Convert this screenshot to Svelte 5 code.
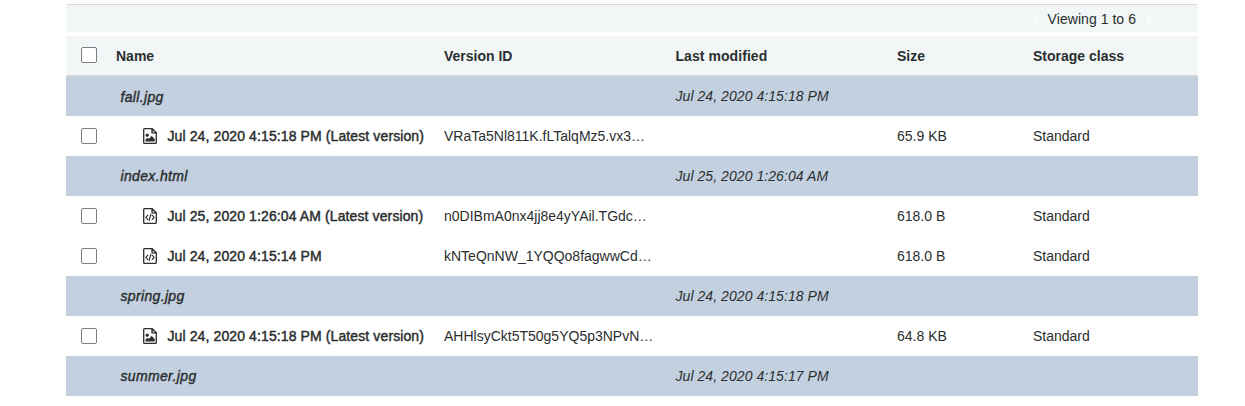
<script>
  const rows = [
    { group: true, name: 'fall.jpg', modified: 'Jul 24, 2020 4:15:18 PM' },
    { icon: 'image', name: 'Jul 24, 2020 4:15:18 PM (Latest version)', version: 'VRaTa5Nl811K.fLTalqMz5.vx3…', size: '65.9 KB', storage: 'Standard' },
    { group: true, name: 'index.html', modified: 'Jul 25, 2020 1:26:04 AM' },
    { icon: 'code', name: 'Jul 25, 2020 1:26:04 AM (Latest version)', version: 'n0DIBmA0nx4jj8e4yYAil.TGdc…', size: '618.0 B', storage: 'Standard' },
    { icon: 'code', name: 'Jul 24, 2020 4:15:14 PM', version: 'kNTeQnNW_1YQQo8fagwwCd…', size: '618.0 B', storage: 'Standard' },
    { group: true, name: 'spring.jpg', modified: 'Jul 24, 2020 4:15:18 PM' },
    { icon: 'image', name: 'Jul 24, 2020 4:15:18 PM (Latest version)', version: 'AHHlsyCkt5T50g5YQ5p3NPvN…', size: '64.8 KB', storage: 'Standard' },
    { group: true, name: 'summer.jpg', modified: 'Jul 24, 2020 4:15:17 PM' }
  ];
</script>

<main>
  <div class="pager">
    <svg class="arrow" viewBox="0 0 5 8"><path d="M4.2 .7 1 4l3.2 3.3" /></svg>
    <span class="viewing">Viewing 1 to 6</span>
    <svg class="arrow" viewBox="0 0 5 8"><path d="M.8 .7 4 4 .8 7.3" /></svg>
  </div>
  <div class="row head">
    <span class="check"><span class="box"></span></span>
    <span>Name</span>
    <span>Version ID</span>
    <span class="modified">Last modified</span>
    <span>Size</span>
    <span>Storage class</span>
  </div>
  {#each rows as row, i}
    {#if row.group}
      <div class="row group" class:first={i === 0}>
        <span></span>
        <span class="folder">{row.name}</span>
        <span></span>
        <span class="modified">{row.modified}</span>
      </div>
    {:else}
      <div class="row">
        <span class="check"><span class="box"></span></span>
        <span class="file">
          <svg class="icon" viewBox="0 0 14 16">
            <path class="line" d="M1.6 .7h7.6l4.1 4v9.7q0 .9-.9.9H1.6q-.9 0-.9-.9V1.6q0-.9.9-.9z M9 .9v4h4.1" />
            {#if row.icon === 'image'}
              <circle cx="4.2" cy="7.2" r="1.6" />
              <path d="M2.5 13.4v-2.2l2-1.2 1.6.7 2.6-3 1.6 2 1.4 1v2.7z" />
            {:else}
              <path class="thin" d="M5.1 6.9 2.9 9.4l2.2 2.5 M8.9 6.9l2.2 2.5-2.2 2.5 M7.9 6 6.1 12.9" />
            {/if}
          </svg>
          <span class="stamp">{row.name}</span>
        </span>
        <span>{row.version}</span>
        <span></span>
        <span>{row.size}</span>
        <span>{row.storage}</span>
      </div>
    {/if}
  {/each}
</main>

<style>
  :global(body) { background: #fff; }
  main {
    margin: 4px 47px 10px 66px;
    color: #2a2e2e;
    font: 14px/20px "Liberation Sans", Arial, sans-serif;
    white-space: nowrap;
  }
  .pager {
    display: flex;
    align-items: center;
    justify-content: flex-end;
    box-sizing: border-box;
    height: 28px;
    margin-bottom: 4px;
    padding: 0 46px 0 0;
    border-top: 1px solid #dadada;
    background: #f2f6f7;
  }
  .viewing { margin: 0 11px 0 9px; letter-spacing: .05px; }
  .arrow { width: 5px; height: 8px; margin-top: 1px; fill: none; stroke: #fff; stroke-width: 1.6; }
  .row {
    display: grid;
    grid-template-columns: 50px 328px 231px 222px 136px 1fr;
    align-items: center;
    height: 40px;
  }
  .head {
    box-sizing: border-box;
    height: 41px;
    padding-top: 1px;
    border-bottom: 2px solid #d5d7d7;
    background: #f2f6f7;
    font-weight: 700;
  }
  .head .check { padding-bottom: 2px; }
  .group { background: #c3d0e0; font-style: italic; }
  .first { height: 39px; }
  .first .modified { padding-bottom: 2px; }
  .check { display: flex; padding-left: 15px; }
  .box {
    box-sizing: border-box;
    width: 16px;
    height: 16px;
    border: 1px solid #788086;
    border-radius: 2px;
    background: #fff;
  }
  .folder { padding-left: 4.5px; letter-spacing: .34px; -webkit-text-stroke: .4px; }
  .modified { padding-left: .5px; letter-spacing: .06px; }
  .file { display: flex; align-items: center; padding-left: 27px; }
  .stamp { margin-left: 10.5px; letter-spacing: .11px; -webkit-text-stroke: .45px; }
  .icon { width: 14px; height: 16px; fill: #2a2e2e; }
  .line { fill: none; stroke: #2a2e2e; stroke-width: 1.3; }
  .thin { fill: none; stroke: #2a2e2e; stroke-width: 1.1; }
</style>
